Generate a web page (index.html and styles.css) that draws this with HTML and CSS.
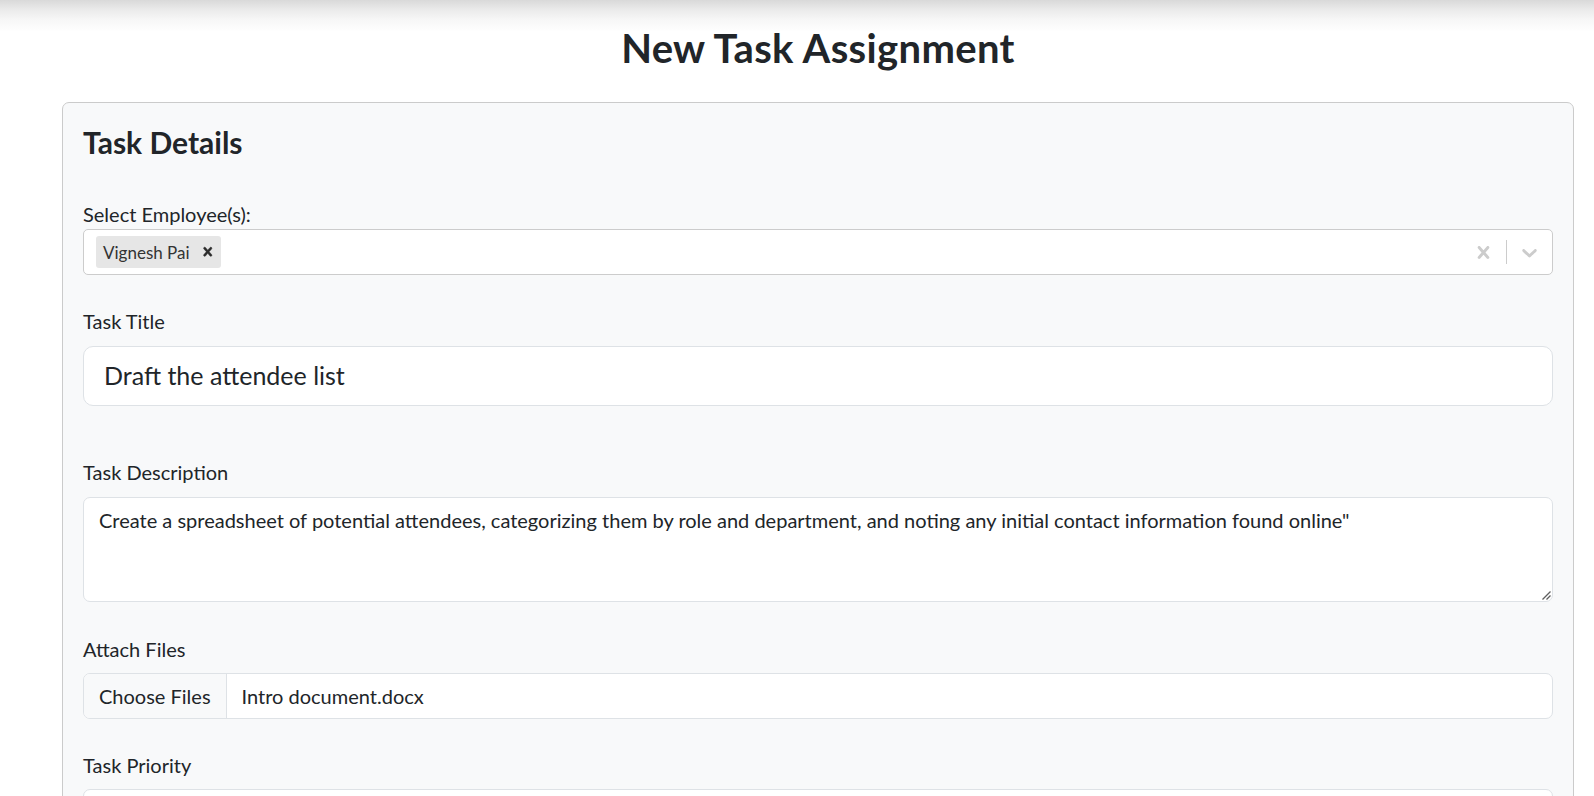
FILE: index.html
```html
<!DOCTYPE html>
<html lang="en">
<head>
<meta charset="utf-8">
<title>New Task Assignment</title>
<link rel="stylesheet" href="styles.css">
</head>
<body>
<div class="top-shade"></div>
<main class="page">
  <h1 class="page-title">New Task Assignment</h1>
  <section class="card">
    <h4 class="card-title">Task Details</h4>

    <div class="field field-employees">
      <label class="label-plain">Select Employee(s):</label>
      <div class="rs-control">
        <div class="rs-values">
          <div class="rs-chip">
            <span class="rs-chip-label">Vignesh Pai</span>
            <span class="rs-chip-remove">
              <svg viewBox="0 0 20 20" width="17.5" height="17.5"><path d="M14.348 14.849c-0.469 0.469-1.229 0.469-1.697 0l-2.651-3.030-2.651 3.029c-0.469 0.469-1.229 0.469-1.697 0-0.469-0.469-0.469-1.229 0-1.697l2.758-3.15-2.759-3.152c-0.469-0.469-0.469-1.228 0-1.697s1.228-0.469 1.697 0l2.652 3.031 2.651-3.031c0.469-0.469 1.228-0.469 1.697 0s0.469 1.229 0 1.697l-2.758 3.152 2.758 3.15c0.469 0.469 0.469 1.229 0 1.698z"/></svg>
            </span>
          </div>
        </div>
        <div class="rs-indicators">
          <div class="rs-ind">
            <svg viewBox="0 0 20 20" width="25" height="25"><path d="M14.348 14.849c-0.469 0.469-1.229 0.469-1.697 0l-2.651-3.030-2.651 3.029c-0.469 0.469-1.229 0.469-1.697 0-0.469-0.469-0.469-1.229 0-1.697l2.758-3.15-2.759-3.152c-0.469-0.469-0.469-1.228 0-1.697s1.228-0.469 1.697 0l2.652 3.031 2.651-3.031c0.469-0.469 1.228-0.469 1.697 0s0.469 1.229 0 1.697l-2.758 3.152 2.758 3.15c0.469 0.469 0.469 1.229 0 1.698z"/></svg>
          </div>
          <span class="rs-sep"></span>
          <div class="rs-ind">
            <svg viewBox="0 0 20 20" width="25" height="25"><path d="M4.516 7.548c0.436-0.446 1.043-0.481 1.576 0l3.908 3.747 3.908-3.747c0.533-0.481 1.141-0.446 1.574 0 0.436 0.445 0.408 1.197 0 1.615-0.406 0.418-4.695 4.502-4.695 4.502-0.217 0.223-0.502 0.335-0.787 0.335s-0.57-0.112-0.789-0.335c0 0-4.287-4.084-4.695-4.502s-0.436-1.17 0-1.615z"/></svg>
          </div>
        </div>
      </div>
    </div>

    <div class="field field-title">
      <label class="form-label">Task Title</label>
      <div class="input input-lg">Draft the attendee list</div>
    </div>

    <div class="field field-desc">
      <label class="form-label">Task Description</label>
      <div class="input textarea">Create a spreadsheet of potential attendees, categorizing them by role and department, and noting any initial contact information found online"<svg class="grip" viewBox="0 0 10 10" width="10" height="10"><path d="M9.5 1.5 L1.5 9.5 M9.5 5.5 L5.5 9.5" stroke="#5f5f5f" stroke-width="1.3" fill="none"/></svg></div>
    </div>

    <div class="field field-files">
      <label class="form-label">Attach Files</label>
      <div class="input file-input">
        <span class="file-btn">Choose Files</span>
        <span class="file-name">Intro document.docx</span>
      </div>
    </div>

    <div class="field field-priority">
      <label class="form-label">Task Priority</label>
      <div class="input select-input"></div>
    </div>
  </section>
</main>
</body>
</html>
```

FILE: styles.css
```css
html, body {
  margin: 0;
  padding: 0;
  overflow: hidden;
  background: #ffffff;
}

body {
  font-family: Lato, "Liberation Sans", sans-serif;
  font-size: 20px;
  line-height: 1.5;
  color: #212529;
}

.top-shade {
  position: fixed;
  top: 0;
  left: 0;
  right: 0;
  height: 32px;
  background: linear-gradient(to bottom, #d9d9d9 0, #ebebeb 10px, #f7f7f7 20px, #ffffff 32px);
  pointer-events: none;
}

.page {
  margin: 0 20px 0 62px;
  padding-top: 24px;
}

.page-title {
  margin: 0;
  font-size: 40px;
  line-height: 48px;
  font-weight: 700;
  letter-spacing: 0.35px;
  text-align: center;
}

.card {
  margin-top: 30px;
  background: #f8f9fa;
  border: 1px solid #cbcbcb;
  border-radius: 7px;
  padding: 21px 20px 40px 20px;
}

.card-title {
  margin: 0 0 39px;
  font-size: 30px;
  line-height: 36px;
  font-weight: 700;
}

.field {
  display: flex;
  flex-direction: column;
}

.label-plain,
.form-label {
  display: block;
  height: 30px;
  line-height: 30px;
}

.form-label {
  margin-bottom: 10px;
}

.field-employees { margin-bottom: 31px; }
.field-title { margin-bottom: 51px; }
.field-desc { margin-bottom: 32px; }
.field-files { margin-bottom: 31px; }

.field-files .form-label,
.field-priority .form-label {
  margin-bottom: 9px;
}

/* react-select like control */
.rs-control {
  box-sizing: border-box;
  height: 46px;
  display: flex;
  align-items: center;
  background: #ffffff;
  border: 1px solid #cccccc;
  border-radius: 5px;
}

.rs-values {
  flex: 1;
  display: flex;
  align-items: center;
  padding: 0 10px 0 12px;
}

.rs-chip {
  display: flex;
  align-items: center;
  height: 32px;
  background: #e6e6e6;
  border-radius: 3px;
}

.rs-chip-label {
  font-size: 17px;
  line-height: 25px;
  color: #333333;
  padding: 0 4px 0 7px;
}

.rs-chip-remove {
  display: flex;
  align-items: center;
  padding: 0 5px;
  height: 100%;
}

.rs-chip-remove svg {
  fill: #2b2b2b;
  stroke: #2b2b2b;
  stroke-width: 0.6;
  display: block;
}

.rs-indicators {
  display: flex;
  align-items: center;
  align-self: stretch;
}

.rs-ind {
  display: flex;
  align-items: center;
  padding: 10px;
}

.rs-ind svg {
  fill: #cccccc;
  display: block;
}

.rs-sep {
  width: 1px;
  align-self: stretch;
  margin: 10px 0;
  background: #cccccc;
}

/* bootstrap-like inputs */
.input {
  box-sizing: border-box;
  background: #ffffff;
  border: 1px solid #dee2e6;
  border-radius: 7px;
}

.input-lg {
  height: 60px;
  padding: 10px 20px;
  font-size: 25px;
  line-height: 37.5px;
  border-radius: 10px;
}

.textarea {
  position: relative;
  height: 105px;
  padding: 7px 15px;
  line-height: 30px;
  white-space: nowrap;
  overflow: hidden;
}

.grip {
  position: absolute;
  right: 1px;
  bottom: 1px;
}

.file-input {
  height: 46px;
  display: flex;
  align-items: stretch;
  overflow: hidden;
}

.file-btn {
  display: flex;
  align-items: center;
  padding: 0 15px;
  background: #f8f9fa;
  border-right: 1px solid #dee2e6;
}

.file-name {
  display: flex;
  align-items: center;
  padding: 0 15px;
}

.select-input {
  height: 47px;
}
```
